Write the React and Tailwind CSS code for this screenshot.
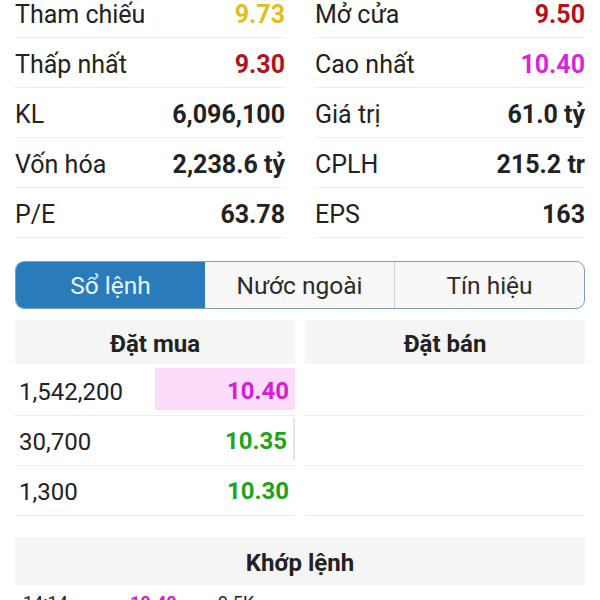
import React from "react";

const stats = [
  ["Tham chiếu", "9.73", "text-[#e3bb22]", "Mở cửa", "9.50", "text-[#b3121a]"],
  ["Thấp nhất", "9.30", "text-[#b3121a]", "Cao nhất", "10.40", "text-[#d924d9]"],
  ["KL", "6,096,100", "text-[#222222]", "Giá trị", "61.0 tỷ", "text-[#222222]"],
  ["Vốn hóa", "2,238.6 tỷ", "text-[#222222]", "CPLH", "215.2 tr", "text-[#222222]"],
  ["P/E", "63.78", "text-[#222222]", "EPS", "163", "text-[#222222]"],
];

function StatRow({ label, value, color }) {
  return (
    <div className="h-[50px] pt-[4px] flex items-center justify-between border-b border-[#eeeeee]">
      <span className="text-[#222222]">{label}</span>
      <span className={"font-bold " + color}>{value}</span>
    </div>
  );
}

const buys = [
  ["1,542,200", "10.40", "text-[#d420d4]", true],
  ["30,700", "10.35", "text-[#1ca51c]", false],
  ["1,300", "10.30", "text-[#1ca51c]", false],
];

export default function App() {
  return (
    <div
      className="w-[600px] h-[600px] overflow-hidden bg-white text-[25px] leading-none"
      style={{ fontFamily: "Roboto, 'Noto Sans', sans-serif" }}
    >
      <div className="grid grid-cols-2 gap-x-[30px] px-[15px] -mt-[12px]">
        <div className="flex flex-col">
          {stats.map((s) => (
            <StatRow key={s[0]} label={s[0]} value={s[1]} color={s[2]} />
          ))}
        </div>
        <div className="flex flex-col">
          {stats.map((s) => (
            <StatRow key={s[3]} label={s[3]} value={s[4]} color={s[5]} />
          ))}
        </div>
      </div>

      <div className="mx-[15px] mt-[23px] h-[48px] pt-[3px] flex rounded-[9px] border border-[#7f9db3] overflow-hidden text-[24.5px] bg-[#f8f8f8]">
        <div className="w-[189px] -mt-[3px] pt-[3px] flex items-center justify-center bg-[#2a7bba] text-[#e8f3fc]">Sổ lệnh</div>
        <div className="flex-1 flex items-center justify-center text-[#2b2b2b] border-r border-[#c9d3da] -mt-[3px] pt-[3px]">Nước ngoài</div>
        <div className="w-[189px] flex items-center justify-center text-[#2b2b2b]">Tín hiệu</div>
      </div>

      <div className="mx-[15px] mt-[11px] grid grid-cols-2 gap-x-[10px] text-[24px]">
        <div className="flex flex-col">
          <div className="h-[44px] pt-[4px] flex items-center justify-center bg-[#f5f5f5] font-bold text-[#222222]">Đặt mua</div>
          <div className="mt-[2px] flex flex-col">
            {buys.map((b, i) => (
              <div key={b[0]} className="h-[50px] flex items-stretch justify-between border-b border-[#eeeeee]">
                <span className="pl-[4px] pt-[3px] flex items-center text-[#222222]">{b[0]}</span>
                <span
                  className={
                    "w-[140px] flex items-center justify-end pr-[6px] pt-[3px] font-bold mt-[2px] mb-[5px] " +
                    b[2] +
                    (b[3] ? " bg-[#fcdcfa]" : "") +
                    (i === 1 ? " border-r-2 border-[#dfe8df]" : "")
                  }
                >
                  {b[1]}
                </span>
              </div>
            ))}
          </div>
        </div>
        <div className="flex flex-col">
          <div className="h-[44px] pt-[4px] flex items-center justify-center bg-[#f5f5f5] font-bold text-[#222222]">Đặt bán</div>
          <div className="mt-[2px] flex flex-col">
            <div className="h-[50px] border-b border-[#eeeeee]" />
            <div className="h-[50px] border-b border-[#eeeeee]" />
            <div className="h-[50px] border-b border-[#eeeeee]" />
          </div>
        </div>
      </div>

      <div className="mx-[15px] mt-[21px] h-[48px] pt-[4px] flex items-center justify-center bg-[#f5f5f5] font-bold text-[24px] text-[#222222]">
        Khớp lệnh
      </div>
      <div className="mx-[15px] mt-[9px] flex items-start text-[18px]">
        <span className="pl-[8px] w-[115px] text-[#222222]">14:14</span>
        <span className="w-[88px] font-bold text-[#d420d4]">10.40</span>
        <span className="text-[#222222]">9.5K</span>
      </div>
    </div>
  );
}
